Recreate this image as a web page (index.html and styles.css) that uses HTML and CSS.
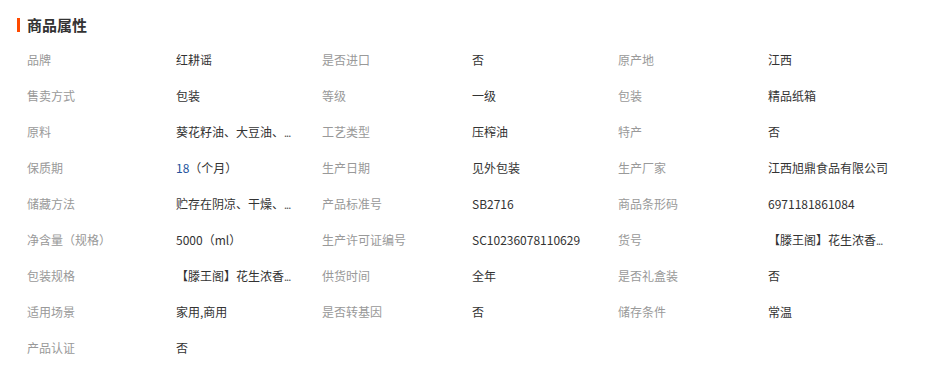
FILE: index.html
```
<!DOCTYPE html>
<html lang="zh-CN">
<head>
<meta charset="utf-8">
<title>商品属性</title>
<link rel="stylesheet" href="styles.css">
</head>
<body>
<section class="attrs">
  <h2 class="title"><span class="bar"></span>商品属性</h2>
  <div class="grid">
    <div class="k">品牌</div><div class="v">红耕谣</div>
    <div class="k">是否进口</div><div class="v">否</div>
    <div class="k">原产地</div><div class="v">江西</div>

    <div class="k">售卖方式</div><div class="v">包装</div>
    <div class="k">等级</div><div class="v">一级</div>
    <div class="k">包装</div><div class="v">精品纸箱</div>

    <div class="k">原料</div><div class="v">葵花籽油、大豆油、<span class="dots">...</span></div>
    <div class="k">工艺类型</div><div class="v">压榨油</div>
    <div class="k">特产</div><div class="v">否</div>

    <div class="k">保质期</div><div class="v"><span class="num">18</span>（个月）</div>
    <div class="k">生产日期</div><div class="v">见外包装</div>
    <div class="k">生产厂家</div><div class="v">江西旭鼎食品有限公司</div>

    <div class="k">储藏方法</div><div class="v">贮存在阴凉、干燥、<span class="dots">...</span></div>
    <div class="k">产品标准号</div><div class="v">SB2716</div>
    <div class="k">商品条形码</div><div class="v">6971181861084</div>

    <div class="k">净含量（规格）</div><div class="v">5000（ml）</div>
    <div class="k">生产许可证编号</div><div class="v">SC10236078110629</div>
    <div class="k">货号</div><div class="v">【滕王阁】花生浓香<span class="dots">...</span></div>

    <div class="k">包装规格</div><div class="v">【滕王阁】花生浓香<span class="dots">...</span></div>
    <div class="k">供货时间</div><div class="v">全年</div>
    <div class="k">是否礼盒装</div><div class="v">否</div>

    <div class="k">适用场景</div><div class="v">家用,商用</div>
    <div class="k">是否转基因</div><div class="v">否</div>
    <div class="k">储存条件</div><div class="v">常温</div>

    <div class="k">产品认证</div><div class="v">否</div>
  </div>
</section>
</body>
</html>
```
FILE: styles.css
```
html, body {
  margin: 0;
  padding: 0;
  background: #fff;
}
body {
  font-family: "Microsoft YaHei", "Noto Sans CJK SC", "Noto Sans", sans-serif;
  font-size: 12px;
  color: #333;
}
.attrs {
  padding: 16px 0 0 17px;
}
.title {
  display: flex;
  align-items: center;
  gap: 7px;
  margin: 0;
  height: 18px;
  font-size: 15px;
  font-weight: bold;
  color: #333;
  line-height: 18px;
}
.bar {
  display: block;
  width: 3px;
  height: 14px;
  background: #ff4a00;
}
.grid {
  display: grid;
  grid-template-columns: 149px 146px 150px 146px 150px 1fr;
  grid-auto-rows: 36px;
  margin-top: 8px;
  padding-left: 10px;
}
.k, .v {
  line-height: 36px;
  white-space: nowrap;
}
.k {
  color: #999;
}
.v {
  color: #333;
}
.dots {
  letter-spacing: -1px;
  font-size: 11px;
  color: #555;
}
.num {
  color: #24539c;
}
```
